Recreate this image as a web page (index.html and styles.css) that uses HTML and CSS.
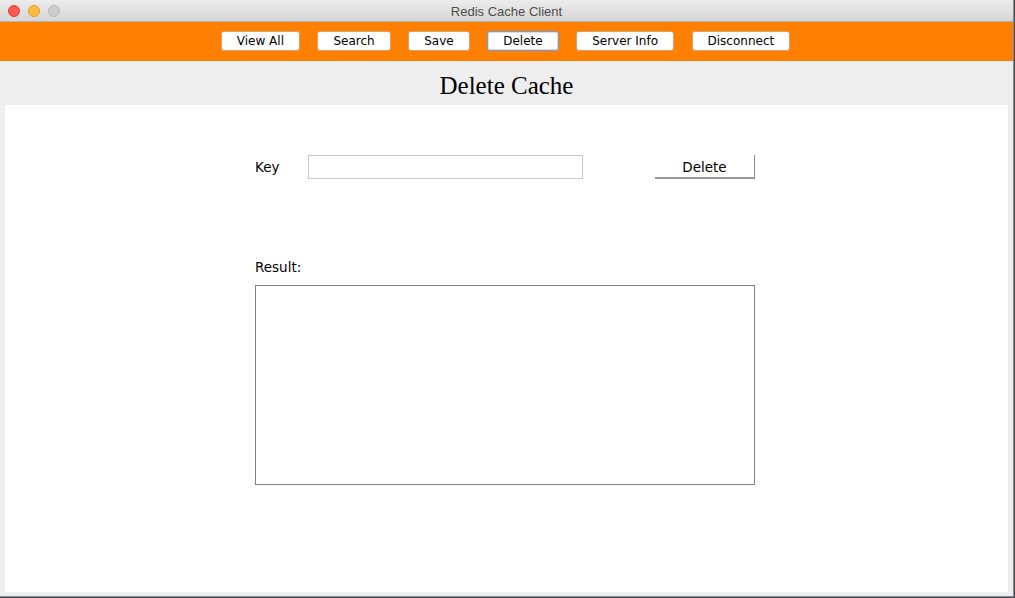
FILE: index.html
```html
<!DOCTYPE html>
<html>
<head>
<meta charset="utf-8">
<title>Redis Cache Client</title>
<link rel="stylesheet" href="styles.css">
</head>
<body>
<div class="window">
  <div class="titlebar">
    <div class="lights">
      <span class="light red"></span>
      <span class="light yellow"></span>
      <span class="light gray"></span>
    </div>
    <div class="title">Redis Cache Client</div>
  </div>
  <div class="toolbar">
    <button class="tb-btn">View All</button>
    <button class="tb-btn">Search</button>
    <button class="tb-btn">Save</button>
    <button class="tb-btn active">Delete</button>
    <button class="tb-btn">Server Info</button>
    <button class="tb-btn">Disconnect</button>
  </div>
  <div class="header">Delete Cache</div>
  <div class="panel">
    <div class="form">
      <div class="key-row">
        <label class="label key-label">Key</label>
        <input class="key-input" type="text">
        <button class="del-btn">Delete</button>
      </div>
      <div class="label result-label">Result:</div>
      <div class="result-box"></div>
    </div>
  </div>
</div>
</body>
</html>
```
FILE: styles.css
```css
* { box-sizing: border-box; }
html, body {
  margin: 0;
  padding: 0;
  width: 1015px;
  height: 598px;
  overflow: hidden;
  background: #4a4c55;
}
.window {
  width: 1014px;
  height: 597px;
  display: flex;
  flex-direction: column;
  background: #eeeeee;
  border-right: 1px solid #8a8a8e;
  border-bottom: 1px solid #8a8a8e;
}
.titlebar {
  position: relative;
  height: 22px;
  flex: none;
  background: linear-gradient(#ececec, #d6d6d6);
  border-bottom: 1px solid #b4b4b4;
  display: flex;
  align-items: center;
  justify-content: center;
  padding-top: 1px;
}
.lights {
  position: absolute;
  left: 8px;
  top: 5px;
  display: flex;
  gap: 8px;
}
.light {
  width: 12px;
  height: 12px;
  border-radius: 50%;
  display: block;
}
.light.red { background: #fc5753; border: 1px solid #df3d39; }
.light.yellow { background: #fdbc40; border: 1px solid #de9e26; }
.light.gray { background: #cdcdcd; border: 1px solid #b8b8b8; }
.title {
  font-family: "Liberation Sans", Arial, sans-serif;
  font-size: 13px;
  color: #4d4d4d;
}
.toolbar {
  flex: none;
  height: 39px;
  background: #ff8000;
  display: flex;
  justify-content: center;
  align-items: flex-start;
  padding-top: 9px;
  padding-right: 2px;
  gap: 17.5px;
}
.tb-btn {
  height: 20px;
  padding: 0 15px;
  margin: 0;
  background: #ffffff;
  border: 1px solid #d9a070;
  border-radius: 3px;
  font-family: "DejaVu Sans", Verdana, sans-serif;
  font-size: 12px;
  line-height: 18px;
  color: #000;
}
.tb-btn.active {
  border-color: #6d9bd8;
  box-shadow: inset 0 0 0 1px #cfe0f6;
}
.header {
  flex: none;
  height: 44px;
  line-height: 44px;
  padding-top: 3px;
  text-align: center;
  font-family: "Liberation Serif", "Times New Roman", serif;
  font-size: 25px;
  color: #000;
}
.panel {
  flex: 1;
  margin: 0 5px 4px 5px;
  background: #ffffff;
  display: flex;
  padding-left: 250px;
}
.form {
  width: 500px;
  padding-top: 50px;
  display: flex;
  flex-direction: column;
}
.label {
  font-family: "DejaVu Sans", Verdana, sans-serif;
  font-size: 13.5px;
  color: #000;
}
.key-row {
  display: flex;
  align-items: center;
  height: 24px;
}
.key-label {
  width: 53px;
  line-height: 24px;
}
.key-input {
  width: 275px;
  height: 24px;
  margin: 0;
  border: 1px solid #c8c8c8;
  background: #fff;
  outline: none;
  padding: 0 4px;
}
.del-btn {
  margin: 0 0 0 auto;
  width: 100px;
  height: 24px;
  padding: 0;
  background: #fff;
  border: none;
  border-right: 1px solid #8a8a8a;
  border-bottom: 2px solid #9a9a9a;
  font-family: "DejaVu Sans", Verdana, sans-serif;
  font-size: 13.5px;
  line-height: 24px;
  color: #000;
}
.result-label {
  margin-top: 80px;
  line-height: 16px;
  height: 16px;
}
.result-box {
  margin-top: 10px;
  width: 500px;
  height: 200px;
  border: 1px solid #808080;
}
```
